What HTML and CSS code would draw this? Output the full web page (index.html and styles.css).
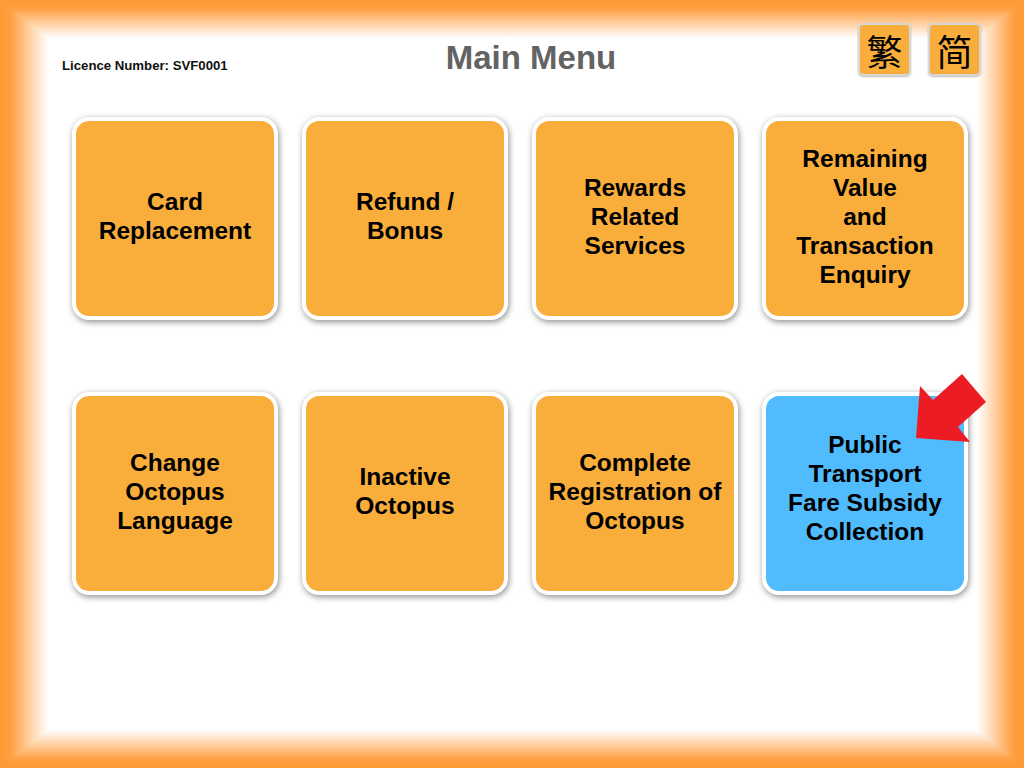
FILE: index.html
```html
<!DOCTYPE html>
<html>
<head>
<meta charset="utf-8">
<title>Main Menu</title>
<link rel="stylesheet" href="styles.css">
</head>
<body>
<div class="screen">
  <div class="header">
    <div class="licence">Licence Number: SVF0001</div>
    <h1 class="title">Main Menu</h1>
    <div class="langs">
      <div class="lang lang-tc">繁</div>
      <div class="lang lang-sc">简</div>
    </div>
  </div>
  <div class="grid">
    <div class="tile">Card<br>Replacement</div>
    <div class="tile">Refund /<br>Bonus</div>
    <div class="tile">Rewards<br>Related<br>Services</div>
    <div class="tile">Remaining<br>Value<br>and<br>Transaction<br>Enquiry</div>
    <div class="tile">Change<br>Octopus<br>Language</div>
    <div class="tile">Inactive<br>Octopus</div>
    <div class="tile">Complete<br>Registration of<br>Octopus</div>
    <div class="tile tile-blue">Public<br>Transport<br>Fare Subsidy<br>Collection</div>
  </div>
  <svg class="arrow" width="80" height="76" viewBox="0 0 80 76">
    <polygon points="52,4 76,32 48,57 60,72 6,68 10,16 23,30" fill="#ed1c24"/>
  </svg>
</div>
</body>
</html>
```

FILE: styles.css
```css
html, body {
  margin: 0;
  padding: 0;
}

body {
  font-family: "Liberation Sans", Arial, sans-serif;
}

.screen {
  position: relative;
  width: 1024px;
  height: 768px;
  box-sizing: border-box;
  padding-top: 23px;
  overflow: hidden;
  background-color: #ffffff;
  background-image:
    linear-gradient(to right, #ff9933 0, #ff9d3d 10px, #ffffff 48px),
    linear-gradient(to left, #ff9933 0, #ff9d3d 10px, #ffffff 47px),
    linear-gradient(to bottom, #ff9933 0, #ff9d3d 8px, #ffffff 38px),
    linear-gradient(to top, #ff9933 0, #ff9d3d 8px, #ffffff 38px);
  background-blend-mode: darken;
}

.header {
  display: grid;
  grid-template-columns: 321px 296px 302px;
  padding-left: 62px;
  height: 94px;
  align-items: start;
}

.licence {
  margin-top: 35px;
  font-size: 13.2px;
  line-height: 15px;
  font-weight: bold;
  color: #111111;
}

.title {
  margin: 15px 0 0 0;
  font-size: 33px;
  line-height: 40px;
  font-weight: bold;
  color: #636363;
  text-align: center;
}

.langs {
  display: flex;
  justify-content: flex-end;
  gap: 17px;
}

.lang {
  width: 53px;
  height: 53px;
  box-sizing: border-box;
  border: 2px solid #d6d6d6;
  border-radius: 5px;
  background: #f9ae3b;
  box-shadow: 0 1px 2px rgba(0, 0, 0, 0.25);
  display: flex;
  align-items: center;
  justify-content: center;
  font-size: 36px;
  line-height: 1;
  color: #000000;
}

.lang-tc {
  font-family: "Noto Sans CJK TC", "Noto Sans CJK SC", sans-serif;
}

.lang-sc {
  font-family: "Noto Sans CJK SC", sans-serif;
}

.grid {
  display: grid;
  grid-template-columns: repeat(4, 206px);
  grid-auto-rows: 203px;
  column-gap: 24px;
  row-gap: 72px;
  padding-left: 72px;
}

.tile {
  box-sizing: border-box;
  border: 4px solid #ffffff;
  border-radius: 17px;
  padding-bottom: 5px;
  background: #f9ae3b;
  box-shadow: 1px 2px 6px rgba(0, 0, 0, 0.45);
  display: flex;
  align-items: center;
  justify-content: center;
  text-align: center;
  font-size: 24.5px;
  line-height: 29px;
  font-weight: bold;
  color: #000000;
}

.tile-blue {
  background: #50bbfd;
  padding-bottom: 12px;
}

.arrow {
  position: absolute;
  left: 910px;
  top: 370px;
}
```
